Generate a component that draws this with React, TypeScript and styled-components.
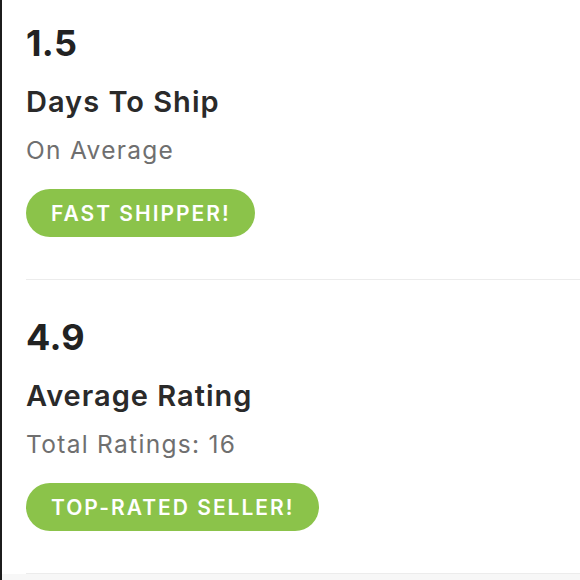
import styled, { createGlobalStyle } from "styled-components";

const GlobalStyle = createGlobalStyle`
  body {
    margin: 0;
    background: #ffffff;
    font-family: Inter, "Liberation Sans", sans-serif;
  }
`;

const Page = styled.div`
  display: flex;
  flex-direction: column;
  min-height: 580px;
  border-left: 2px solid #1c1c1c;
  background-color: #ffffff;
`;

const Section = styled.section<{ $first?: boolean }>`
  display: flex;
  flex-direction: column;
  align-items: flex-start;
  margin-left: 24px;
  padding: ${({ $first }) => ($first ? "25px" : "39px")} 0 42px;
  border-bottom: 1px solid #ececec;
`;

const Value = styled.div`
  font-size: 36px;
  line-height: 36px;
  font-weight: 700;
  letter-spacing: 0.3px;
  color: #222222;
`;

const Title = styled.h2`
  margin: 23px 0 0;
  font-size: 29px;
  line-height: 36px;
  font-weight: 600;
  letter-spacing: 1px;
  color: #2a2a2a;
`;

const Caption = styled.div`
  margin-top: 15px;
  font-size: 24.5px;
  line-height: 30px;
  letter-spacing: 1.3px;
  color: #6f6f6f;
`;

const Badge = styled.span`
  display: inline-flex;
  align-items: center;
  height: 48px;
  margin-top: 24px;
  padding: 0 24px 0 25px;
  border-radius: 24px;
  background-color: #8bc34a;
  color: #ffffff;
  font-size: 21px;
  font-weight: 600;
  letter-spacing: 2px;
`;

const Footer = styled.div`
  flex: 1;
  background-color: #f7f7f7;
`;

const stats = [
  { value: "1.5", title: "Days To Ship", caption: "On Average", badge: "FAST SHIPPER!" },
  { value: "4.9", title: "Average Rating", caption: "Total Ratings: 16", badge: "TOP-RATED SELLER!" },
];

export default function App() {
  return (
    <>
      <GlobalStyle />
      <Page>
        {stats.map((s, i) => (
          <Section key={s.value} $first={i === 0}>
            <Value>{s.value}</Value>
            <Title>{s.title}</Title>
            <Caption>{s.caption}</Caption>
            <Badge>{s.badge}</Badge>
          </Section>
        ))}
        <Footer />
      </Page>
    </>
  );
}
